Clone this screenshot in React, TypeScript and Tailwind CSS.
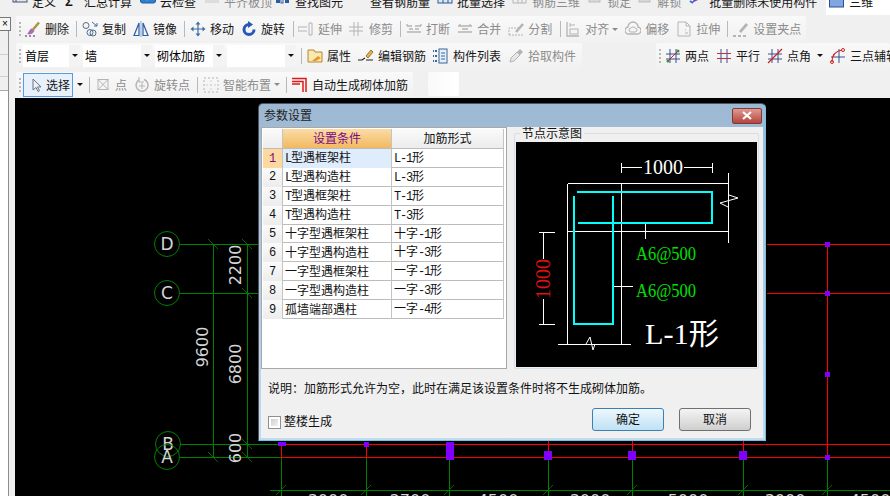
import type { ReactNode } from "react";
import clsx from "clsx";

const Ic = ({ children, w = 16 }: { children: ReactNode; w?: number }) => (
  <svg width={w} height={16} viewBox={`0 0 ${w} 16`} fill="none" className="shrink-0">
    {children}
  </svg>
);

const GRAY = "#b4b4b4";

const icons: Record<string, ReactNode> = {
  define: (<><rect x="1" y="-6" width="14" height="14" fill="#dfe6ee" stroke="#44546a" /><path d="M1 4h14" stroke="#44546a" /><path d="M4 -6v14" stroke="#44546a" /></>),
  cloud: (<><rect x="0.5" y="-6" width="15" height="15" rx="2" fill="#2f7fd0" stroke="#1b5ea5" /><path d="M4 2l3 3 5-6" stroke="#fff" strokeWidth="2" /></>),
  flat: (<><rect x="3" y="-4" width="10" height="10" fill="#c9c9c9" /><rect x="1" y="6" width="14" height="3" fill="#dcdcdc" /></>),
  find: (<><rect x="1" y="-2" width="4" height="11" fill="#2c5aa0" /><rect x="6" y="-2" width="2" height="11" fill="#fff" stroke="#2c5aa0" /><rect x="10" y="-2" width="4" height="11" fill="#2c5aa0" /></>),
  glasses: (<><circle cx="4" cy="3" r="3" fill="#384a63" /><circle cx="12" cy="3" r="3" fill="#384a63" /><path d="M6 3h4" stroke="#384a63" strokeWidth="2" /></>),
  batch: (<><rect x="1" y="-3" width="14" height="12" fill="#dce8f7" stroke="#31598f" /><path d="M1 3h14M6 -3v12M11 -3v12" stroke="#31598f" /></>),
  rebar3d: (<><path d="M1 9V0h13v9z" stroke={GRAY} /><path d="M6 0v9M10 0v9M1 4h13" stroke={GRAY} /></>),
  lock: (<><rect x="2" y="-2" width="11" height="10" fill="#d8d8d8" stroke="#bdbdbd" /><path d="M7.5 0v5" stroke="#8c8c8c" strokeWidth="2" /></>),
  purge: (<><path d="M3 9l3-6 3 3z" fill="#8a3fb8" /><path d="M7 3l6-4" stroke="#d8aa2c" strokeWidth="2" /><path d="M1 7l3 2" stroke="#2c6fd0" strokeWidth="2" /></>),
  eraser: (<><path d="M2 13c3 1 6 0 7.500-3.500L7 7.500C4 8 4.500 11 2 13z" fill="#b06ab8" /><path d="M8 8.500l6-7" stroke="#a8983c" strokeWidth="2.500" /><path d="M0 15h2M4 15h2M8 15h2" stroke="#333" /></>),
  copy: (<><circle cx="4" cy="4.500" r="3" stroke="#5a6b80" /><circle cx="8" cy="11.500" r="3" stroke="#3d6fa8" /><circle cx="11" cy="12" r="3" stroke="#5a6b80" /><path d="M10 1l5 4M15 2v3h-3" stroke="#3d6fa8" /></>),
  mirror: (<><path d="M1 14.500L6 2v12.500zM15 14.500L10 2v12.500z" stroke="#2a5ea8" strokeWidth="1.200" /><path d="M8 0v16" stroke="#8fa8c8" /></>),
  move: (<><path d="M8 2v12M2 8h12" stroke="#3a6f9f" strokeWidth="1.200" /><path d="M8 0.500L5.500 3.500h5zM8 15.500l-2.500-3h5zM0.500 8l3-2.500v5zM15.500 8l-3-2.500v5z" fill="#3a6f9f" /></>),
  rotate: (<><path d="M8 3.500a5 5 0 1 0 5 5" stroke="#2459b8" strokeWidth="3" /><path d="M7 0l5 3.500L7 7z" fill="#2459b8" /></>),
  extend: (<path d="M0 6h9M0 10h9M0 6v4M11 2v12M14 2v12M11 2h3M11 14h3" stroke={GRAY} />),
  trim: (<path d="M0 6h14M0 10h14M5 1v14M9 1v14" stroke={GRAY} />),
  breakLine: (<path d="M1 5h5M9 5h6M1 11h14M1 5v-2M15 5v-2M3 8h4M9 8h4" stroke={GRAY} strokeWidth="1.300" />),
  merge: (<path d="M1 5h14M1 11h14M3 3v2M13 3v2M5 8h6" stroke={GRAY} strokeWidth="1.300" />),
  split: (<><path d="M1 14V7h10M1 14h14" stroke={GRAY} strokeDasharray="2 1" /><path d="M8 11l7-8" stroke={GRAY} strokeWidth="2.500" /></>),
  align: (<><path d="M2 1v14h12" stroke={GRAY} strokeWidth="1.300" /><rect x="5" y="8" width="8" height="5" stroke={GRAY} /><path d="M5 4h5M5 2v4" stroke={GRAY} /></>),
  offset: (<><path d="M4 13a3.500 3.500 0 0 1-1-7 5 5 0 0 1 10 0 3.500 3.500 0 0 1-1 7z" stroke={GRAY} strokeWidth="1.300" /><path d="M6 11a2 2 0 0 1 0-4 2.500 2.500 0 0 1 4 0 2 2 0 0 1 0 4z" stroke={GRAY} /></>),
  stretch: (<><path d="M2 1h8l4 4v10H2z" stroke={GRAY} /><path d="M10 1v4h4M9 9h1M9 12h3" stroke={GRAY} /></>),
  grip: (<><path d="M6 10l7-8 2 2-7 8z" fill={GRAY} /><path d="M0 15h3M5 15h3M10 15h3" stroke="#777" /></>),
  property: (<><path d="M1 2h6l1 2h7v10H1z" fill="#fbe7b0" stroke="#b8862c" /><path d="M5 13l6-5 3 2-5 3z" fill="#e09a2c" /></>),
  editRebar: (<><path d="M8 8l5-6 2 2-5 6z" fill="#e0b850" stroke="#7a5c1c" strokeWidth="0.800" /><path d="M0 12h4l3-2M8 12h7" stroke="#222" strokeWidth="1.200" /></>),
  list: (<><path d="M0 2v2M0 7v2M0 12v2M3 2v2M3 7v2M3 12v2" stroke="#39679c" strokeWidth="2" /><rect x="6" y="1" width="8" height="14" fill="#e6effa" stroke="#39679c" /><path d="M8 5h4M8 8h4M8 11h4" stroke="#39679c" /></>),
  pick: (<><path d="M2 14l1-4 6-6 3 3-6 6z" fill="#e6e6e6" stroke={GRAY} /><path d="M9 4l3-3 3 3-3 3z" fill={GRAY} /></>),
  twoPoint: (<><path d="M1 6h14M1 11h14M5 1v14M11 1v14" stroke="#3a4f8f" /><path d="M2 14L14 2" stroke="#d02020" /><circle cx="3" cy="13" r="1.500" fill="#3f8f2f" /><circle cx="13" cy="3" r="1.500" fill="#3f8f2f" /></>),
  parallel: (<><path d="M5 1v14M11 1v14" stroke="#3a4f8f" /><path d="M1 5.500h14M1 10.500h14" stroke="#c03040" /></>),
  angle: (<><path d="M1 6h14M1 11h14M5 1v14M11 1v14" stroke="#3a4f8f" /><path d="M1 15L15 1" stroke="#d02020" strokeWidth="1.200" /></>),
  threePoint: (<><path d="M1 9h14M9 1v14" stroke="#3a4f8f" /><path d="M2 14c0-7 4-11 10-12" stroke="#d02020" strokeWidth="1.200" /><circle cx="13" cy="2" r="1.500" stroke="#d02020" /><circle cx="2" cy="14" r="1.500" stroke="#d02020" /></>),
  cursor: (<path d="M5 2v11l3-2.500 2 4 1.500-.8-2-3.800h3.500z" fill="#eef2f7" stroke="#6b7280" />),
  boxX: (<><rect x="3" y="2.500" width="10" height="10" stroke={GRAY} fill="#f4f4f4" /><path d="M3 2.500l10 10M13 2.500l-10 10" stroke={GRAY} /></>),
  rotatePoint: (<><path d="M5 3a6 6 0 1 0 5-.500" stroke={GRAY} strokeWidth="1.500" /><path d="M5 0v5h5" stroke={GRAY} /><path d="M8 6v6M5 9h6" stroke={GRAY} /></>),
  smart: (<><rect x="1" y="1" width="14" height="14" stroke={GRAY} strokeDasharray="2 2" /><path d="M8 3v10M3 8h10" stroke="#cfcfcf" strokeDasharray="2 2" /></>),
  auto: (<path d="M0 1.500h14V15M0 4.500h11V15M0 7h8" stroke="#e01818" strokeWidth="1.500" />),
};

const Grip = () => (
  <div className="ml-[3px] flex flex-col gap-[2px] shrink-0">
    <span className="size-[2px] bg-[#b8b8b8]" />
    <span className="size-[2px] bg-[#b8b8b8]" />
    <span className="size-[2px] bg-[#b8b8b8]" />
    <span className="size-[2px] bg-[#b8b8b8]" />
  </div>
);

const Sep = ({ className }: { className?: string }) => (
  <div className={clsx("w-px h-[16px] bg-[#b4bac0] shrink-0", className)} />
);

const Caret = ({ className, gray }: { className?: string; gray?: boolean }) => (
  <div
    className={clsx(
      "w-0 h-0 shrink-0 border-x-[3px] border-t-[3px] border-x-transparent",
      gray ? "border-t-[#8a8a8a]" : "border-t-[#111]",
      className,
    )}
  />
);

const Tool = ({ icon, label, gray, className }: { icon: string; label: string; gray?: boolean; className?: string }) => (
  <div className={clsx("flex items-center gap-[4px] shrink-0 whitespace-nowrap", gray ? "text-[#8c8c8c]" : "text-[#161616]", className)}>
    <Ic>{icons[icon]}</Ic>
    <span className="pt-[2px]">{label}</span>
  </div>
);

const Pill = ({ children, className }: { children?: ReactNode; className?: string }) => (
  <div className={clsx("flex items-center rounded-[2px] bg-linear-to-b from-[#f9f9f9] to-[#f1f1f1] shrink-0", className)}>{children}</div>
);

const Combo = ({ label, w, className }: { label?: string; w: string; className?: string }) => (
  <div className={clsx("h-[22px] bg-white flex items-center justify-between pl-[2px] shrink-0", w, className)}>
    <span className="pt-[2px]">{label}</span>
    <div className="w-[11px] h-[22px] bg-[#f3f3f3] flex items-center justify-center">
      <Caret />
    </div>
  </div>
);

const rows = [
  ["L型遇框架柱", "L-1形"],
  ["L型遇构造柱", "L-3形"],
  ["T型遇框架柱", "T-1形"],
  ["T型遇构造柱", "T-3形"],
  ["十字型遇框架柱", "十字-1形"],
  ["十字型遇构造柱", "十字-3形"],
  ["一字型遇框架柱", "一字-1形"],
  ["一字型遇构造柱", "一字-3形"],
  ["孤墙端部遇柱", "一字-4形"],
];

// SimSun-like cell text: half width latin, full width CJK
const Song = ({ text }: { text: string }) => (
  <>
    {text.split(/([A-Za-z0-9-]+)/).map((part, i) =>
      i % 2 ? (
        <span key={i} className="font-['Liberation_Mono',monospace] tracking-[-1.2px]">
          {part}
        </span>
      ) : (
        <span key={i}>{part}</span>
      ),
    )}
  </>
);

const ParamTable = () => (
  <div className="w-[246px] h-[242px] shrink-0 bg-white border border-[#a8a8a8] pl-px pt-px text-[12px] text-[#111]">
    <div className="w-[241px] grid grid-cols-[20px_109px_112px] border-b border-[#bcbcbc]">
      <div className="h-[19px] bg-linear-to-b from-[#fafafa] to-[#ececec] border-r border-[#c4c4c4]" />
      <div className="h-[19px] bg-linear-to-b from-[#fbdca4] to-[#f2b860] border-r border-[#c4c4c4] flex items-center justify-center text-[#7a0a86]">设置条件</div>
      <div className="h-[19px] bg-linear-to-b from-[#fafafa] to-[#ececec] border-r border-[#c4c4c4] flex items-center justify-center">加筋形式</div>
    </div>
    {rows.map(([cond, form], i) => (
      <div key={cond} className="w-[241px] grid grid-cols-[20px_109px_112px] border-b border-[#bcbcbc] h-[18.9px]">
        <div
          className={clsx(
            "border-r border-[#c4c4c4] flex items-center justify-center font-['Liberation_Mono',monospace]",
            i === 0 ? "bg-[#fdd9a0] text-[#7a0a86]" : "bg-linear-to-b from-[#fafafa] to-[#ececec]",
          )}
        >
          {i + 1}
        </div>
        <div className={clsx("border-r border-[#c4c4c4] pl-[2px] flex items-center whitespace-nowrap", i === 0 && "bg-[#deecfb]")}>
          <span><Song text={cond} /></span>
        </div>
        <div className="border-r border-[#c4c4c4] pl-[2px] flex items-center whitespace-nowrap">
          <span><Song text={form} /></span>
        </div>
      </div>
    ))}
  </div>
);

const SERIF = "'Liberation Serif','Noto Sans CJK SC',serif";

const NodeSketch = () => (
  <svg width={241} height={225} viewBox="516 142 241 225" className="block bg-black" shapeRendering="crispEdges">
    <g stroke="#fff" fill="none">
      <path d="M621.500 163v10M712.500 163v10M622 167.500h20M684 167.500h28" />
      <path d="M567.500 183.500h161M567.500 183.500v161M621.500 183.500v161M567.500 231.500h161M728.500 173v70M558 344.500h73" />
      <path d="M645.500 224v15M613 286.500h20" />
      <path d="M539 232.500h16M543.500 232.500v26M543.500 299v25M539 324.500h16" />
    </g>
    <g stroke="#fff" fill="none" shapeRendering="auto">
      <path d="M729 195l9 3-18 5 8 4" />
      <path d="M586 344l4-7 3 13 2-6" />
    </g>
    <path d="M577 192h134.500v31H578M573.500 196v127.500h39V196" stroke="#00ffff" strokeWidth="2" fill="none" />
    <text x="663" y="174" textAnchor="middle" fontSize="20" fill="#fff" fontFamily={SERIF}>1000</text>
    <text transform="translate(550 279) rotate(-90)" textAnchor="middle" fontSize="20" fill="#e01010" fontFamily={SERIF}>1000</text>
    <text x="636" y="260" fontSize="19" fill="#00e000" fontFamily={SERIF} textLength="60" lengthAdjust="spacingAndGlyphs">A6@500</text>
    <text x="636" y="297" fontSize="19" fill="#00e000" fontFamily={SERIF} textLength="60" lengthAdjust="spacingAndGlyphs">A6@500</text>
    <text x="645" y="344" fontSize="30" fill="#fff" fontFamily={SERIF} textLength="74" lengthAdjust="spacingAndGlyphs">L-1形</text>
  </svg>
);

const Dialog = () => (
  <div className="absolute left-[258px] top-[103px] w-[508px] h-[338px] rounded-t-[5px] bg-linear-to-b from-[#9db8d2] to-[#c3dbf1] border border-[#4a5560] border-b-[#6fc4e4] border-r-[#6fc4e4] px-[2px] pb-[2px] flex flex-col">
    <div className="h-[23px] shrink-0 flex items-center justify-between">
      <span className="pl-[3px] text-[12px] text-[#222]">参数设置</span>
      <div className="w-[30px] h-[16px] mr-[1px] rounded-[2px] border border-[#7d3a38] bg-linear-to-b from-[#dd9a92] to-[#b5433c] flex items-center justify-center">
        <svg width="12" height="9" viewBox="0 0 12 9">
          <path d="M2 1l8 7M10 1L2 8" stroke="#fff" strokeWidth="2.200" />
        </svg>
      </div>
    </div>
    <div className="flex-1 bg-[#f0f0f0] flex flex-col text-[12px] text-[#111]">
      <div className="flex">
        <ParamTable />
        <div className="relative ml-[7px] mt-[6px] w-[245px] h-[236px] rounded-[2px] border border-[#d5dfe5] pl-px pt-[8px]">
          <span className="absolute left-[5px] -top-[6px] bg-[#f0f0f0] px-[2px] leading-[13px]">节点示意图</span>
          <NodeSketch />
        </div>
      </div>
      <div className="mt-[12px] h-[16px] pl-[7px] leading-[16px] whitespace-nowrap">说明：加筋形式允许为空，此时在满足该设置条件时将不生成砌体加筋。</div>
      <div className="mt-[11px] h-[23px] flex items-center pl-[7px] pr-[12px]">
        <div className="mt-[5px] flex items-center gap-[3px]">
          <div className="size-[13px] border border-[#8e8f8f] bg-white p-[2px]">
            <div className="size-full bg-linear-to-br from-[#cfcfcf] to-[#f2f2f2]" />
          </div>
          <span>整楼生成</span>
        </div>
        <button className="ml-auto w-[72px] h-[23px] rounded-[3px] border border-[#3c7fb1] bg-linear-to-b from-[#edf7fd] to-[#bfe2f5]">确定</button>
        <button className="ml-[15px] w-[72px] h-[23px] rounded-[3px] border border-[#707070] bg-linear-to-b from-[#f4f4f4] to-[#cfcfcf]">取消</button>
      </div>
    </div>
  </div>
);

const slash = (x: number, y: number, key: string) => <path key={key} d={`M${x - 5} ${y + 5}L${x + 5} ${y - 5}`} />;
const back = (x: number, y: number, key: string) => <path key={key} d={`M${x - 5} ${y - 5}L${x + 5} ${y + 5}`} />;

const Axis = ({ x, y, t }: { x: number; y: number; t: string }) => (
  <g>
    <circle cx={x} cy={y} r={12.500} stroke="#008000" fill="none" />
    <text x={x} y={y + 6} textAnchor="middle" fontSize="17" fill="#d4d4d4">{t}</text>
  </g>
);

const DimV = ({ x, y, t }: { x: number; y: number; t: string }) => (
  <text transform={`translate(${x} ${y}) rotate(-90)`} textAnchor="middle" fontSize="16" fill="#d4d4d4">{t}</text>
);

const gridX = [281, 366, 449, 548, 632, 743, 827];

const Plan = () => (
  <svg width={875} height={398} viewBox="15 98 875 398" className="block bg-black" fontFamily="'DejaVu Sans',sans-serif">
    <g stroke="#008000" fill="none" shapeRendering="crispEdges">
      <path d="M180 244.500h80M180 293.500h80M180 444.500h102M180 457.500h102" />
      <path d="M213.500 244v214M247.500 244v214" />
      <path d="M270 490.500h620" strokeWidth="1" />
      {gridX.map((x) => (
        <path key={x} d={`M${x + 0.500} 457v39`} />
      ))}
    </g>
    <g stroke="#008000" fill="none" strokeWidth="0.800">
      {back(213, 244, "a")}
      {back(247, 244, "b")}
      {back(247, 293, "c")}
      {back(247, 444, "d")}
      {back(213, 457, "e")}
      {back(247, 457, "f")}
      {gridX.map((x) => slash(x, 490, `s${x}`))}
    </g>
    <g stroke="#ff0000" fill="none" shapeRendering="crispEdges">
      <path d="M767 244.500h123M767 293.500h123M281 444.500h609M281 457.500h609" />
      <path d="M281.500 442v15M366.500 442v15M449.500 442v15M548.500 440v17M632.500 440v17M743.500 440v17M827.500 244v213" />
    </g>
    <g fill="#8000ff" shapeRendering="crispEdges">
      <rect x="278" y="442" width="8" height="4" />
      <rect x="364" y="442" width="5" height="5" />
      <rect x="446" y="442" width="8" height="18" />
      <rect x="544" y="451" width="8" height="9" />
      <rect x="628" y="451" width="8" height="9" />
      <rect x="739" y="451" width="8" height="9" />
      <rect x="825" y="455" width="5" height="5" />
      <rect x="825" y="242" width="5" height="5" />
      <rect x="825" y="291" width="5" height="5" />
      <rect x="825" y="372" width="5" height="5" />
    </g>
    <Axis x={167} y={244} t="D" />
    <Axis x={167} y={293} t="C" />
    <Axis x={168} y={444} t="B" />
    <Axis x={167} y={457} t="A" />
    <DimV x={208} y={347} t="9600" />
    <DimV x={241} y={265} t="2200" />
    <DimV x={241} y={364} t="6800" />
    <DimV x={241} y={448} t="600" />
    <g fontSize="16" fill="#d4d4d4" textAnchor="middle">
      <text x="328" y="506">3000</text>
      <text x="410" y="506">2700</text>
      <text x="498" y="506">4500</text>
      <text x="590" y="506">3000</text>
      <text x="688" y="506">5000</text>
      <text x="785" y="506">3000</text>
      <text x="870" y="506">4500</text>
    </g>
  </svg>
);

export default function App() {
  return (
    <div className="relative w-[890px] h-[496px] overflow-hidden bg-[#f0f0f0] text-[12px] font-['Liberation_Sans','Noto_Sans_CJK_SC',sans-serif] flex flex-col">
      {/* top menu strip, cut off by the window edge */}
      <div className="h-[16px] shrink-0 overflow-hidden">
        <div className="-mt-[11px] h-[26px] flex items-center text-[#161616] whitespace-nowrap">
          <Tool icon="define" label="定义" className="ml-[12px] gap-[4px]" />
          <span className="ml-[9px] w-[14px] font-bold text-[13px]">Σ</span>
          <span className="ml-[5px] pt-[2px]">汇总计算</span>
          <Tool icon="cloud" label="云检查" className="ml-[8px]" />
          <Tool icon="flat" label="平齐板顶" gray className="ml-[8px]" />
          <Tool icon="find" label="查找图元" className="ml-[3px]" />
          <Tool icon="glasses" label="查看钢筋量" className="ml-[7px]" />
          <Tool icon="batch" label="批量选择" className="ml-[7px]" />
          <Tool icon="rebar3d" label="钢筋三维" gray className="ml-[7px]" />
          <Tool icon="lock" label="锁定" gray className="ml-[7px]" />
          <Tool icon="lock" label="解锁" gray className="ml-[6px]" />
          <Tool icon="purge" label="批量删除未使用构件" className="ml-[8px]" />
          <div className="ml-[9px] flex-1 h-[26px] bg-white flex items-center pl-[3px] gap-[5px]">
            <svg width="15" height="16" viewBox="0 0 15 16" fill="none">
              <rect x="0.500" y="0" width="14" height="13" fill="#7fa6e0" stroke="#2c4f96" />
            </svg>
            <span className="pt-[2px]">三维</span>
          </div>
        </div>
      </div>

      <div className="flex-1 flex min-h-0">
        {/* docked panel edge */}
        <div className="w-[15px] shrink-0 pt-px">
          <div className="relative h-full w-[9px] border-r border-[#8a8f96] bg-white flex flex-col">
            <div className="h-[74px] bg-[#f0f0f0] border-b border-[#a8a8a8] flex flex-col">
              <div className="h-[13px] border-b border-[#9a9a9a]" />
              <div className="h-[25px] border-b border-[#d0d0d0]" />
              <div className="h-[22px] border-b border-[#d0d0d0]" />
            </div>
            <div className="absolute left-0 top-0 w-[11px] h-[14px] bg-[#f5f5f5] border border-l-0 border-[#777] flex items-center justify-center text-[10px] leading-none">×</div>
          </div>
        </div>

        <div className="flex-1 min-w-0 flex flex-col overflow-hidden">
          <Pill className="ml-px h-[26px] w-[790px]">
            <Grip />
            <Tool icon="eraser" label="删除" className="ml-[4px]" />
            <Sep className="ml-[7px]" />
            <Tool icon="copy" label="复制" className="ml-[5px]" />
            <Tool icon="mirror" label="镜像" className="ml-[7px]" />
            <Sep className="ml-[7px]" />
            <Tool icon="move" label="移动" className="ml-[5px]" />
            <Tool icon="rotate" label="旋转" className="ml-[7px]" />
            <Sep className="ml-[8px]" />
            <Tool icon="extend" label="延伸" gray className="ml-[4px]" />
            <Tool icon="trim" label="修剪" gray className="ml-[7px]" />
            <Sep className="ml-[7px]" />
            <Tool icon="breakLine" label="打断" gray className="ml-[5px]" />
            <Tool icon="merge" label="合并" gray className="ml-[7px]" />
            <Tool icon="split" label="分割" gray className="ml-[7px]" />
            <Sep className="ml-[8px]" />
            <Tool icon="align" label="对齐" gray className="ml-[4px]" />
            <Caret gray className="ml-[3px]" />
            <Tool icon="offset" label="偏移" gray className="ml-[7px]" />
            <Tool icon="stretch" label="拉伸" gray className="ml-[7px]" />
            <Sep className="ml-[7px]" />
            <Tool icon="grip" label="设置夹点" gray className="ml-[5px]" />
          </Pill>

          <div className="mt-px flex h-[25px] shrink-0">
            <Pill className="ml-px w-[566px]">
              <Grip />
              <Combo label="首层" w="w-[57px]" className="ml-[2px]" />
              <Combo label="墙" w="w-[69px]" className="ml-[3px]" />
              <Combo label="砌体加筋" w="w-[69px]" className="ml-[3px]" />
              <Combo w="w-[69px]" className="ml-[3px]" />
              <Sep className="ml-[5px]" />
              <Tool icon="property" label="属性" className="ml-[5px]" />
              <Tool icon="editRebar" label="编辑钢筋" className="ml-[7px]" />
              <Tool icon="list" label="构件列表" className="ml-[7px]" />
              <Tool icon="pick" label="拾取构件" gray className="ml-[7px]" />
            </Pill>
            <Pill className="ml-[74px] w-[234px] overflow-hidden">
              <Grip />
              <Tool icon="twoPoint" label="两点" className="ml-[4px]" />
              <Tool icon="parallel" label="平行" className="ml-[7px]" />
              <Tool icon="angle" label="点角" className="ml-[7px]" />
              <Caret className="ml-[6px]" />
              <Tool icon="threePoint" label="三点辅轴" className="ml-[7px]" />
            </Pill>
          </div>

          <div className="mt-[4px] flex h-[25px] shrink-0">
            <Pill className="ml-px w-[397px]">
              <Grip />
              <div className="ml-[2px] w-[50px] h-[24px] border border-[#5a9ae0] bg-[#e6f1fc] flex items-center gap-[2px] pl-[4px] shrink-0 whitespace-nowrap text-[#161616]">
                <Ic>{icons.cursor}</Ic>
                <span className="pt-[2px]">选择</span>
              </div>
              <Caret className="ml-[4px]" />
              <Sep className="ml-[6px]" />
              <Tool icon="boxX" label="点" gray className="ml-[5px]" />
              <Tool icon="rotatePoint" label="旋转点" gray className="ml-[7px]" />
              <Sep className="ml-[7px]" />
              <Tool icon="smart" label="智能布置" gray className="ml-[5px]" />
              <Caret gray className="ml-[3px]" />
              <Sep className="ml-[6px]" />
              <Tool icon="auto" label="自动生成砌体加筋" className="ml-[5px]" />
            </Pill>
            <Pill className="ml-[15px] w-[31px] h-[24px] bg-linear-to-r from-[#f9f9f9] to-[#ffffff]" />
          </div>

          <div className="mt-px flex-1 min-h-0">
            <Plan />
          </div>
        </div>
      </div>

      <Dialog />
    </div>
  );
}
